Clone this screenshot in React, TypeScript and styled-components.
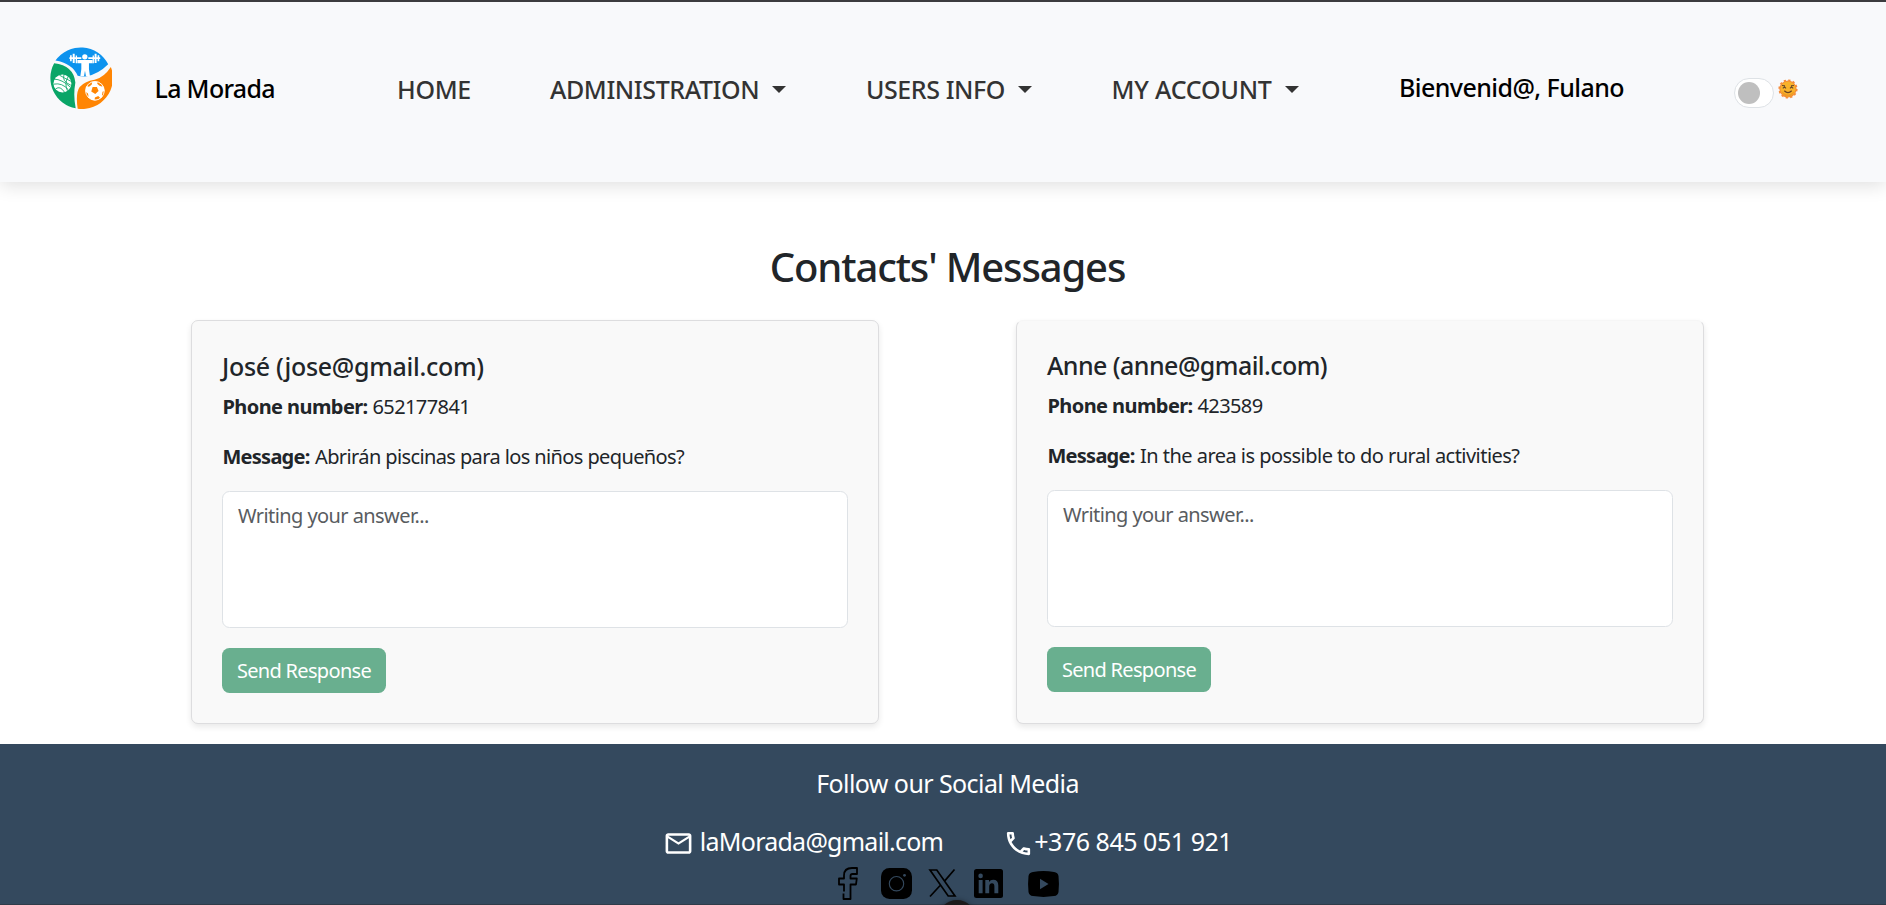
import React from "react";
import styled, { createGlobalStyle } from "styled-components";

const GlobalStyle = createGlobalStyle`
  *, *::before, *::after { box-sizing: border-box; }
  html, body { margin: 0; overflow: hidden; }
  body {
    background: #fff;
    color: #212529;
    font-family: "Noto Sans", "Open Sans", sans-serif;
    font-size: 20px;
    line-height: 30px;
  }
`;

const Page = styled.div`
  width: 1895px;
  height: 905px;
  overflow: hidden;
  display: flex;
  flex-direction: column;
  position: relative;
`;

const Tracked = styled.span<{ $track?: number }>`
  letter-spacing: ${(p) => p.$track ?? 0}px;
  white-space: pre;
`;

/* ---------- header ---------- */

const Header = styled.header`
  flex: none;
  width: 1886px;
  height: 182px;
  padding: 45px 0 0 50px;
  border-top: 2px solid #3c3c3f;
  background: #f8f9fb;
  box-shadow: 0 4px 17px rgba(0, 0, 0, 0.12);
  display: grid;
  grid-template-columns: 104.5px 242.5px 153px 316px 245.5px 287.5px 335px auto;
  align-items: start;
`;

const LogoMark = styled.svg`
  width: 62px;
  height: 62px;
  display: block;
`;

const HeaderText = styled.div<{ $drop: number }>`
  margin-top: ${(p) => p.$drop}px;
  font-size: 25px;
  font-weight: 500;
  line-height: 38px;
  color: #000;
`;

const NavLink = styled.a`
  margin-top: 23px;
  display: flex;
  align-items: center;
  gap: 13px;
  font-size: 25px;
  font-weight: 500;
  line-height: 38px;
  color: #333;
  text-decoration: none;
`;

const Caret = styled.span`
  border-top: 7px solid #333;
  border-left: 7px solid transparent;
  border-right: 7px solid transparent;
`;

const ThemeSwitch = styled.div`
  margin-top: 31px;
  display: flex;
  align-items: flex-start;
  gap: 4px;
`;

const Track = styled.div`
  width: 40px;
  height: 30px;
  padding: 3px;
  border: 1px solid #dee2e6;
  border-radius: 15px;
  background: #fff;
`;

const Knob = styled.div`
  width: 22px;
  height: 22px;
  border-radius: 50%;
  background: #bfbfbf;
`;

const Sun = styled.svg`
  width: 20px;
  height: 20px;
  margin-top: 1px;
`;

/* ---------- messages ---------- */

const Main = styled.main`
  flex: none;
  height: 562px;
  padding-top: 61px;
  display: flex;
  flex-direction: column;
  align-items: center;
`;

const Title = styled.h1`
  margin: 0 0 29px;
  font-size: 40px;
  font-weight: 500;
  line-height: 48px;
`;

const Cards = styled.section`
  display: grid;
  grid-template-columns: 688px 688px;
  column-gap: 137px;
`;

const Card = styled.article<{ $raised?: boolean }>`
  height: 404px;
  padding: ${(p) => (p.$raised ? 29 : 30)}px 30px 0;
  border: 1px solid #dddddf;
  border-top-color: ${(p) => (p.$raised ? "#f6f6f6" : "#dddddf")};
  border-radius: 7px;
  background: #f9f9f9;
  box-shadow: 0 3px 6px rgba(0, 0, 0, 0.09);
`;

const Sender = styled.h2`
  margin: 0 0 10px;
  font-size: 25px;
  font-weight: 500;
  line-height: 30px;
`;

const Line = styled.p`
  margin: 0 0 19px;
  padding: 1px 0 0 0.5px;
  display: flex;
`;

const Label = styled.strong<{ $track: number; $width: number }>`
  font-weight: 700;
  letter-spacing: ${(p) => p.$track}px;
  width: ${(p) => p.$width}px;
  white-space: nowrap;
`;

const Answer = styled.textarea`
  display: block;
  width: 100%;
  height: 137px;
  margin: 0 0 20px;
  padding: 9px 15px;
  border: 1px solid #dee2e6;
  border-radius: 7.5px;
  background: #fff;
  font: inherit;
  letter-spacing: -0.58px;
  resize: none;
  &::placeholder { color: #595c5f; opacity: 1; }
`;

const SendButton = styled.button`
  width: 164px;
  height: 45px;
  padding: 1px 0 0;
  border: 0;
  border-radius: 7.5px;
  background: #69af8f;
  color: #fff;
  font: inherit;
  letter-spacing: -0.68px;
`;

/* ---------- footer ---------- */

const Footer = styled.footer`
  flex: 1;
  padding-top: 20px;
  background: #34495e;
  color: #fff;
  font-size: 25px;
  line-height: 38px;
  display: flex;
  flex-direction: column;
  align-items: center;
`;

const ContactRow = styled.div`
  margin-top: 20px;
  display: flex;
  justify-content: center;
`;

const Contact = styled.div<{ $gap: number }>`
  display: flex;
  align-items: center;
  gap: ${(p) => p.$gap}px;
  & + & { margin-left: 60px; }
`;

const ContactIcon = styled.svg`
  width: 31px;
  height: 31px;
  margin-top: 5px;
  fill: #fff;
`;

const Socials = styled.div`
  margin: 7px 0 0 2px;
  display: flex;
  align-items: flex-start;
`;

const SocialIcon = styled.svg<{ $w: number; $h: number; $gap?: number; $drop?: number }>`
  width: ${(p) => p.$w}px;
  height: ${(p) => p.$h}px;
  margin: ${(p) => p.$drop ?? 0}px 0 0 ${(p) => p.$gap ?? 0}px;
  overflow: visible;
`;

const BottomEdge = styled.div`
  position: absolute;
  left: 0;
  right: 0;
  bottom: 0;
  height: 1px;
  background: #2f3b49;
`;

const FloatingDot = styled.div`
  position: absolute;
  left: 938px;
  top: 900px;
  width: 38px;
  height: 38px;
  border-radius: 50%;
  background: #1d1a1b;
  box-shadow: 0 0 5px rgba(0, 0, 0, 0.35);
`;

const Logo = () => (
  <LogoMark viewBox="29.5 22 187 187">
    <path fill="#0d93ee" d="M46 63A93 93 0 0 1 205 74Q176 103 141 110Q126 112 113 109Q96 71 46 63Z" />
    <path fill="#0aa567" d="M42 71Q101 78 106 129Q99 168 107 207A93 93 0 0 1 42 71Z" />
    <path fill="#ff8503" d="M213 82A93 93 0 0 1 113 208Q106 161 119 143Q133 126 164 121Q193 113 213 82Z" />
    <g fill="#fff">
      <circle cx="134.5" cy="51.5" r="8" />
      <path d="M112 61H158V71H147V88L150 110H138L135 94L132 110H121L124 88V71H112Z" />
      <path d="M88 53H124V58H88ZM145 53H181V58H145Z" />
      <path d="M90 47H95V65H90ZM98 42H104V70H98ZM107 48H111V71H107ZM164 42H170V70H164ZM173 47H178V65H173ZM158 48H162V71H158Z" />
      <circle cx="67" cy="132" r="27" />
      <circle cx="165" cy="154" r="29" />
    </g>
    <g fill="none" stroke="#0aa567" strokeWidth="2.6">
      <path d="M42 119Q65 119 91 143M41 134Q66 129 85 151M47 148Q60 138 73 158M58 107Q79 119 94 126M72 105Q64 125 92 137M84 112Q72 131 82 154" />
    </g>
    <g fill="#ff8503">
      <path d="M158 143L171 143L176 155L166 164L154 156Z" />
      <path d="M146 130L157 128L155 136L147 142L140 140ZM173 127L185 134L188 142L179 139L172 133ZM137 157L144 162L146 172L140 170ZM165 174L175 170L181 176L172 182L164 181ZM188 157L194 155L191 168L186 169Z" />
    </g>
    <circle cx="165" cy="154" r="28" fill="none" stroke="#fff" strokeWidth="2.5" />
  </LogoMark>
);

const SunFace = () => (
  <Sun viewBox="0 0 20 20">
    <circle cx="10" cy="10" r="8.6" fill="#f58b3a" stroke="#f58b3a" strokeWidth="2" strokeDasharray="2.25 2.25" />
    <circle cx="10" cy="10" r="7.6" fill="#f9b22a" />
    <path d="M3.5 12Q10 19 16.5 12Q15 17.5 10 17.5Q5 17.5 3.5 12Z" fill="#ee9a25" />
    <path d="M4 6.5L7 6.8M16 6.5L13 6.8M4.8 9.3L6.5 7.8L8 9.3M12 9.3L13.5 7.8L15.2 9.3" fill="none" stroke="#6a4a2a" strokeWidth="1.1" />
    <path d="M6.3 11.8Q10 15.4 13.7 11.8" fill="none" stroke="#6a4324" strokeWidth="1.3" />
  </Sun>
);

type Message = {
  name: string;
  nameTrack: number;
  phone: string;
  text: string;
  textTrack: number;
};

const messages: Message[] = [
  {
    name: "José (jose@gmail.com)",
    nameTrack: -0.3,
    phone: "652177841",
    text: "Abrirán piscinas para los niños pequeños?",
    textTrack: -0.61,
  },
  {
    name: "Anne (anne@gmail.com)",
    nameTrack: -0.55,
    phone: "423589",
    text: "In the area is possible to do rural activities?",
    textTrack: -0.53,
  },
];

const menus = [
  { label: "ADMINISTRATION", track: -0.4 },
  { label: "USERS INFO", track: -0.42 },
  { label: "MY ACCOUNT", track: -0.2 },
];

export default function App() {
  return (
    <>
      <GlobalStyle />
      <Page>
        <Header>
          <Logo />
          <HeaderText $drop={22}>
            <Tracked $track={-0.68}>La Morada</Tracked>
          </HeaderText>
          <NavLink>
            <Tracked $track={-0.3}>HOME</Tracked>
          </NavLink>
          {menus.map((m) => (
            <NavLink key={m.label}>
              <Tracked $track={m.track}>{m.label}</Tracked>
              <Caret />
            </NavLink>
          ))}
          <HeaderText $drop={21}>
            <Tracked $track={-0.57}>Bienvenid@, Fulano</Tracked>
          </HeaderText>
          <ThemeSwitch>
            <Track>
              <Knob />
            </Track>
            <SunFace />
          </ThemeSwitch>
        </Header>

        <Main>
          <Title>
            <Tracked $track={-1.15}>Contacts' Messages</Tracked>
          </Title>
          <Cards>
            {messages.map((m, i) => (
              <Card key={m.name} $raised={i === 1}>
                <Sender>
                  <Tracked $track={m.nameTrack}>{m.name}</Tracked>
                </Sender>
                <Line>
                  <Label $track={-0.58} $width={150}>Phone number:</Label>
                  <Tracked $track={-0.6}>{m.phone}</Tracked>
                </Line>
                <Line>
                  <Label $track={-0.75} $width={92.5}>Message:</Label>
                  <Tracked $track={m.textTrack}>{m.text}</Tracked>
                </Line>
                <Answer placeholder="Writing your answer..." />
                <SendButton>Send Response</SendButton>
              </Card>
            ))}
          </Cards>
        </Main>

        <Footer>
          <Tracked $track={-0.58}>Follow our Social Media</Tracked>
          <ContactRow>
            <Contact $gap={6}>
              <ContactIcon viewBox="0 0 24 24">
                <path d="M22 6c0-1.1-.9-2-2-2H4c-1.1 0-2 .9-2 2v12c0 1.1.9 2 2 2h16c1.1 0 2-.9 2-2V6zm-2 0l-8 5-8-5h16zm0 12H4V8l8 5 8-5v10z" />
              </ContactIcon>
              <Tracked $track={-0.75}>laMorada@gmail.com</Tracked>
            </Contact>
            <Contact $gap={0}>
              <ContactIcon viewBox="0 0 24 24">
                <path d="M6.54 5c.06.89.21 1.76.45 2.59l-1.2 1.2c-.41-1.2-.67-2.47-.76-3.79h1.51m9.86 12.02c.85.24 1.72.39 2.6.45v1.49c-1.32-.09-2.59-.35-3.8-.75l1.2-1.19M7.5 3H4c-.55 0-1 .45-1 1 0 9.39 7.61 17 17 17 .55 0 1-.45 1-1v-3.49c0-.55-.45-1-1-1-1.24 0-2.45-.2-3.57-.57-.1-.04-.21-.05-.31-.05-.26 0-.51.1-.71.29l-2.2 2.2c-2.83-1.45-5.15-3.76-6.59-6.59l2.2-2.2c.28-.28.36-.67.25-1.02C8.7 6.45 8.5 5.25 8.5 4c0-.55-.45-1-1-1z" />
              </ContactIcon>
              <Tracked $track={-0.47}>+376 845 051 921</Tracked>
            </Contact>
          </ContactRow>
          <Socials>
            <SocialIcon $w={20} $h={33} viewBox="0 0 20 33">
              <path
                d="M6 24.5V17.5H1V11.5H6V8.5Q6 1 14 1H19V7H14.5Q12.5 7 12.5 9V11.5H18.8L18 17.5H12.5V32H5.500V26.500"
                fill="none"
                stroke="#000"
                strokeWidth="1.8"
                strokeLinejoin="round"
              />
            </SocialIcon>
            <SocialIcon $w={31} $h={31} $gap={23} $drop={1} viewBox="0 0 31 31">
              <rect width="31" height="31" rx="8.5" />
              <circle cx="15.5" cy="15.7" r="7.2" fill="none" stroke="#34495e" strokeWidth="1.1" />
              <circle cx="23.5" cy="7.3" r="1.4" fill="#34495e" />
            </SocialIcon>
            <SocialIcon $w={27} $h={28} $gap={17} $drop={2} viewBox="0 0 27 28">
              <path
                d="M1 1H7.8L26 27H19.2ZM25.5 0.5L15.3 12.4M11.6 16L1 27.5"
                fill="none"
                stroke="#000"
                strokeWidth="1.7"
              />
            </SocialIcon>
            <SocialIcon $w={29} $h={29} $gap={18} $drop={2} viewBox="0 0 29 29">
              <rect width="29" height="29" rx="2.5" />
              <g fill="#34495e">
                <circle cx="6.6" cy="6.9" r="2.3" />
                <path d="M4.7 11H8.6V24.3H4.7ZM11.3 11H15V12.9Q16.3 10.7 19.2 10.7Q24.3 10.7 24.3 16.6V24.3H20.4V17.5Q20.4 14.2 18 14.2Q15.2 14.2 15.2 17.7V24.3H11.3Z" />
              </g>
            </SocialIcon>
            <SocialIcon $w={31} $h={26} $gap={25} $drop={4} viewBox="0 0 31 26">
              <path d="M5 .9Q15.5 -.7 26 .9Q30 1.4 30.5 5Q31.4 13 30.5 21Q30 24.6 26 25.1Q15.5 26.7 5 25.1Q1 24.6 .5 21Q-.4 13 .5 5Q1 1.4 5 .9Z" />
              <path d="M12 7.8L20.5 13L12 18.2Z" fill="#34495e" />
            </SocialIcon>
          </Socials>
        </Footer>
        <BottomEdge />
        <FloatingDot />
      </Page>
    </>
  );
}
